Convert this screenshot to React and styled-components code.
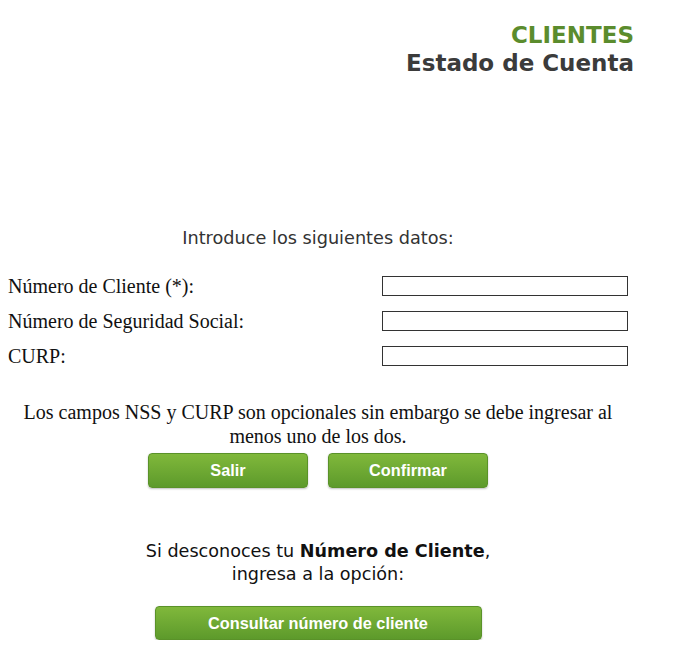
import React from 'react'
import styled, { createGlobalStyle } from 'styled-components'

const GlobalStyle = createGlobalStyle`
  body {
    margin: 8px;
    background: #ffffff;
    font-family: "Liberation Serif", "Times New Roman", serif;
  }
`

const Header = styled.header`
  display: flex;
  flex-direction: column;
  align-items: flex-end;
  padding: 13px 34px 0 0;
  font-family: Verdana, "DejaVu Sans", sans-serif;
  font-weight: bold;
  font-size: 23px;
  line-height: 28px;
`

const Section = styled.div`
  color: #5b8c2d;
`

const Title = styled.div`
  color: #3b3b3b;
`

const Main = styled.main`
  width: 620px;
  margin-top: 150px;
  display: flex;
  flex-direction: column;
  align-items: center;
`

const Intro = styled.p`
  margin: 0 0 26px;
  font-family: Verdana, "DejaVu Sans", sans-serif;
  font-size: 17.7px;
  line-height: 22px;
  color: #333;
`

const Fields = styled.div`
  width: 100%;
  display: flex;
  flex-direction: column;
  gap: 13px;
`

const Row = styled.label`
  display: flex;
  justify-content: space-between;
  align-items: center;
  height: 22px;
  font-size: 20px;
  color: #111;
`

const Input = styled.input`
  width: 246px;
  height: 20px;
  box-sizing: border-box;
  border: 1px solid #333;
  padding: 0 4px;
  margin: 0;
  &:focus {
    outline: none;
  }
`

const Note = styled.p`
  margin: 33px 0 5px;
  text-align: center;
  font-size: 20px;
  line-height: 24px;
  color: #111;
`

const ButtonBar = styled.div`
  display: flex;
  gap: 20px;
`

const GreenButton = styled.button`
  width: ${props => props.wide ? '327px' : '160px'};
  height: ${props => props.wide ? '34px' : '35px'};
  border: 1px solid #5a9229;
  border-radius: 4px;
  background: linear-gradient(#80b83b, #5d9a2b);
  box-shadow: 0 1px 2px rgba(0, 0, 0, 0.25);
  color: #fff;
  font-family: "Liberation Sans", Arial, sans-serif;
  font-weight: bold;
  font-size: 16.3px;
  cursor: pointer;
`

const Help = styled.p`
  margin: 52px 0 20px;
  text-align: center;
  font-family: Verdana, "DejaVu Sans", sans-serif;
  font-size: 17.6px;
  line-height: 23px;
  color: #111;
`

const fields = [
  'Número de Cliente (*):',
  'Número de Seguridad Social:',
  'CURP:'
]

export default function App () {
  return (
    <>
      <GlobalStyle />
      <Header>
        <Section>CLIENTES</Section>
        <Title>Estado de Cuenta</Title>
      </Header>
      <Main>
        <Intro>Introduce los siguientes datos:</Intro>
        <Fields>
          {fields.map(label => (
            <Row key={label}>
              {label}
              <Input type="text" />
            </Row>
          ))}
        </Fields>
        <Note>
          Los campos NSS y CURP son opcionales sin embargo se debe ingresar al<br />
          menos uno de los dos.
        </Note>
        <ButtonBar>
          <GreenButton>Salir</GreenButton>
          <GreenButton>Confirmar</GreenButton>
        </ButtonBar>
        <Help>
          Si desconoces tu <b>Número de Cliente</b>,<br />
          ingresa a la opción:
        </Help>
        <GreenButton wide>Consultar número de cliente</GreenButton>
      </Main>
    </>
  )
}
